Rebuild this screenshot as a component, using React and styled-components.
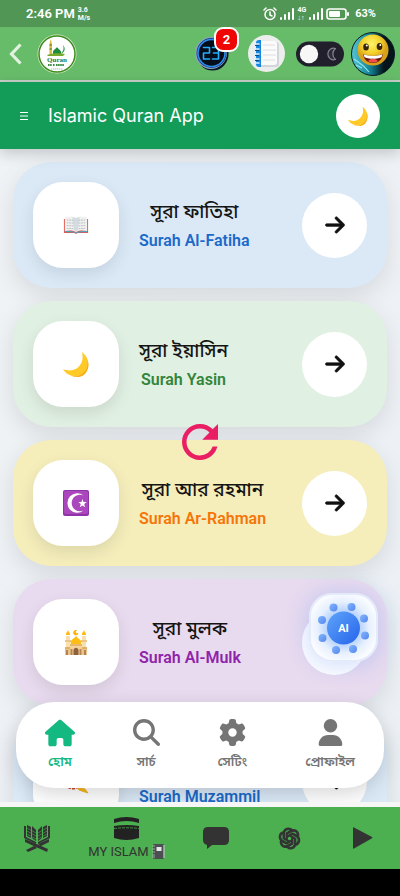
import React from "react";
import styled, { createGlobalStyle } from "styled-components";
import {
  FaArrowRight,
  FaGear,
  FaHouse,
  FaMagnifyingGlass,
  FaUser,
} from "react-icons/fa6";
import { MdRefresh } from "react-icons/md";
import { RiOpenaiFill } from "react-icons/ri";

const GlobalStyle = createGlobalStyle`
  *, *::before, *::after { box-sizing: border-box; }
  body { margin: 0; background: #000; font-family: Roboto, "Noto Sans Bengali", "Noto Sans", sans-serif; }
  button { border: 0; padding: 0; background: none; font: inherit; color: inherit; cursor: pointer; }
  a { color: inherit; text-decoration: none; }
  h1, h2, p { margin: 0; }
  svg { display: block; }
`;

const Shell = styled.div`
  display: flex;
  flex-direction: column;
  height: 100vh;
  overflow: hidden;
`;

const StatusBar = styled.div`
  display: flex;
  align-items: center;
  justify-content: space-between;
  height: 27px;
  padding: 0 24px 0 26px;
  background: #529655;
  color: #fff;
  flex: none;
`;

const StatusGroup = styled.div`
  display: flex;
  align-items: center;
  gap: 3px;
`;

const Clock = styled.span`
  font-size: 13px;
  font-weight: 600;
  line-height: 20px;
`;

const Tiny = styled.span`
  font-size: 7px;
  font-weight: 700;
  line-height: 8px;
  white-space: pre;
`;

const Percent = styled.span`
  margin-left: 2px;
  font-size: 11px;
  font-weight: 700;
`;

const TopBar = styled.header`
  display: flex;
  align-items: center;
  justify-content: space-between;
  height: 55px;
  flex: none;
  padding: 0 5px 0 9px;
  background: #67bc6a;
  border-bottom: 2px solid #c9cfc9;
`;

const TopGroup = styled.div`
  display: flex;
  align-items: center;
  gap: ${(p) => p.$gap}px;
`;

const ClockButton = styled.button`
  position: relative;
  margin-right: 8px;
`;

const PadButton = styled.button`
  margin: 0 4px;
`;

const Badge = styled.span`
  position: absolute;
  top: -9px;
  right: -10px;
  width: 25px;
  height: 25px;
  border: 2px solid #fff;
  border-radius: 9px;
  background: #f00505;
  color: #fff;
  font-size: 13px;
  font-weight: 700;
  line-height: 21px;
  text-align: center;
`;

const AppHeader = styled.div`
  position: relative;
  z-index: 1;
  display: flex;
  align-items: center;
  height: 67px;
  flex: none;
  padding: 0 20px;
  background: #129c58;
  color: #fff;
  box-shadow: 0 4px 14px rgba(0, 0, 0, 0.2);
`;

const Title = styled.h1`
  flex: 1;
  margin-left: 20px;
  font-family: Inter, sans-serif;
  font-size: 18px;
  font-weight: 400;
  line-height: 27px;
`;

const Round = styled.button`
  display: grid;
  place-items: center;
  flex: none;
  width: ${(p) => p.$size}px;
  height: ${(p) => p.$size}px;
  border-radius: 50%;
  background: #fff;
  color: #111;
`;

const Content = styled.main`
  position: relative;
  flex: 1;
  min-height: 0;
  overflow: hidden;
  background: linear-gradient(135deg, #f0f3f5, #ebf0f5);
`;

const CardList = styled.div`
  display: flex;
  flex-direction: column;
  gap: 13px;
  padding: 13px;
`;

const Card = styled.article`
  display: flex;
  align-items: center;
  gap: 20px;
  padding: 20px;
  border-radius: 38px;
  background: ${(p) => p.$bg};
  box-shadow: 0 8px 24px rgba(0, 0, 0, 0.1);
`;

const IconTile = styled.div`
  display: grid;
  place-items: center;
  flex: none;
  width: 86px;
  height: 86px;
  border-radius: 30px;
  background: #fff;
  box-shadow: 0 6px 16px rgba(0, 0, 0, 0.1);
`;

const CardText = styled.div`
  margin-right: auto;
  padding-top: 2px;
  text-align: center;
`;

const Bengali = styled.h2`
  color: #151515;
  font-size: 19px;
  font-weight: 500;
  line-height: 30px;
`;

const English = styled.p`
  color: ${(p) => p.$color};
  font-size: 16px;
  font-weight: 600;
  line-height: 28px;
`;

const Spinner = styled.div`
  position: absolute;
  top: 266px;
  left: 50%;
  margin-left: -27px;
  color: #e91e63;
`;

const AiButton = styled.button`
  position: absolute;
  top: 444px;
  right: 22px;
  width: 69px;
  height: 69px;
  border: 2px solid #e3ebfb;
  border-radius: 23px;
  background: radial-gradient(circle, #b9d4fc 36%, #e7f0fe 56%, #f9fbff 76%);
  box-shadow: 0 2px 22px 4px rgba(120, 160, 245, 0.3);
`;

const FloatNav = styled.nav`
  position: absolute;
  right: 16px;
  bottom: 14px;
  left: 16px;
  display: flex;
  justify-content: space-around;
  padding: 17px 0 14px;
  border-radius: 38px;
  background: #fff;
  box-shadow: 0 6px 20px rgba(0, 0, 0, 0.16);
`;

const FloatLink = styled.a`
  display: flex;
  flex-direction: column;
  align-items: center;
  gap: 4px;
  color: ${(p) => (p.$active ? "#14b881" : "#757575")};
  font-size: 13px;
  font-weight: 600;
  line-height: 24px;
`;

const NavIcon = styled.span`
  display: flex;
  align-items: center;
  height: 27px;
`;

const TabBar = styled.nav`
  display: flex;
  height: 67px;
  flex: none;
  border-top: 5px solid #f5f6f5;
  background: #4caf50;
`;

const Tab = styled.a`
  display: flex;
  flex-direction: column;
  align-items: center;
  justify-content: center;
  gap: 4px;
  flex: ${(p) => (p.$wide ? "0 0 106px" : "1")};
  color: #333;
  font-size: 13px;
  line-height: 16px;
`;

const TabLabel = styled.span`
  display: flex;
  align-items: center;
  gap: 3px;
  white-space: nowrap;
`;

const SystemBar = styled.div`
  height: 27px;
  flex: none;
  background: #000;
`;

const Signal = () => (
  <svg width="14" height="12" viewBox="0 0 14 12" fill="#fff">
    <rect x="0" y="9" width="2" height="3" rx="1" />
    <rect x="4" y="6" width="2" height="6" rx="1" />
    <rect x="8" y="4" width="2" height="8" rx="1" />
    <rect x="12" y="0" width="2" height="12" rx="1" />
  </svg>
);

const Alarm = () => (
  <svg width="14" height="14" viewBox="0 0 14 14" fill="none" stroke="#fff" strokeWidth="1.5" strokeLinecap="round">
    <circle cx="7" cy="7.5" r="5" />
    <path d="M7 5v3l2 1M1 3l2-2M13 3l-2-2" />
  </svg>
);

const Battery = () => (
  <svg width="24" height="12" viewBox="0 0 24 12">
    <rect x="1" y="1" width="19" height="10" rx="2.5" fill="none" stroke="#fff" strokeWidth="1.6" />
    <rect x="3" y="3" width="11" height="6" rx="1" fill="#fff" />
    <rect x="21" y="4" width="2" height="4" rx="1" fill="#fff" />
  </svg>
);

const Logo = () => (
  <svg width="40" height="40" viewBox="0 0 40 40">
    <circle cx="20" cy="20" r="19.5" fill="#dce9cf" />
    <circle cx="20" cy="20" r="18" fill="#fff" stroke="#3c8d1d" strokeWidth="1.5" />
    <path d="M12.500 21V10l1.200-5 1.200 5v11z" fill="#d6b93a" />
    <path d="M12.500 11h2.400M12.500 15h2.400" stroke="#3b7d28" strokeWidth="1" />
    <path d="M16 21v-3c0-2 3-3 4-5 1 2 4 3 4 5v3z" fill="#1f8a3e" />
    <path d="M26 11c3 3 2 8-3 9 4-3 4-6 3-9z" fill="#2f9e4f" />
    <path d="M10 21c5-2 13-2 18-1l-2 2H11z" fill="#77a92c" />
    <text x="20" y="28" textAnchor="middle" fontFamily="Liberation Serif" fontWeight="700" fontSize="7" fill="#257a35">Quran</text>
    <path d="M11 31h4M16 31h2M19 31h8" stroke="#3d8a45" strokeWidth="2" strokeDasharray="1.600 .5" />
    <path d="M14 35h12" stroke="#8aa" strokeWidth=".7" strokeDasharray="1.500 .5" />
  </svg>
);

const DigitalClock = () => (
  <svg width="35" height="35" viewBox="0 0 35 35">
    <ellipse cx="18.500" cy="18" rx="16" ry="16.500" fill="#0b1626" />
    <circle cx="17" cy="17" r="16" fill="#8fa3bd" />
    <circle cx="17.500" cy="17" r="15" fill="#173a78" />
    <circle cx="17.500" cy="17" r="13.500" fill="#060d1a" stroke="#2a8ff0" strokeWidth="1.600" />
    <g fill="none" stroke="#25aefa" strokeWidth="1.600" strokeLinejoin="round" strokeLinecap="round">
      <path d="M9.500 11.500h6V17h-6v6h6" />
      <path d="M18.500 11.500h6V23h-6M19.500 17h5" />
    </g>
  </svg>
);

const Notebook = () => (
  <svg width="37" height="37" viewBox="0 0 37 37">
    <circle cx="18.500" cy="18.500" r="18.500" fill="#eceeed" />
    <rect x="10" y="7" width="21" height="25" rx="3" fill="#d3d6d8" />
    <rect x="9" y="6" width="20" height="24" rx="3" fill="#fbfbfb" />
    <path d="M8 8c0-2 1-3 3-3h2v27h-2c-2 0-3-1-3-3z" fill="#1688e0" />
    <path d="M15 10h12M15 15h13M15 20h13M15 25h12" stroke="#dcdee0" />
    <path d="M7 9h4M7 14h4M7 19h4M7 24h4M7 28h4" stroke="#d8f0ff" strokeWidth="1.600" strokeLinecap="round" />
    <path d="M7 10.500h4M7 15.500h4M7 20.500h4M7 25.500h4" stroke="#124a80" strokeWidth="1" />
  </svg>
);

const ThemeSwitch = () => (
  <svg width="48" height="26" viewBox="0 0 48 26">
    <rect width="48" height="25" y=".5" rx="12.500" fill="#201f2b" />
    <circle cx="13" cy="13" r="9.200" fill="#f7f7f7" />
    <path d="M39.500 7.500a5.800 5.800 0 1 0 0 11 7 7 0 0 1 0-11z" fill="#2c2b37" stroke="#85858e" strokeWidth="1.200" strokeLinejoin="round" />
  </svg>
);

const Smiley = () => (
  <svg width="44" height="44" viewBox="0 0 44 44">
    <defs>
      <radialGradient id="face" cx=".45" cy=".3">
        <stop offset="0" stopColor="#fff36a" />
        <stop offset=".6" stopColor="#f4d22b" />
        <stop offset="1" stopColor="#d9a01a" />
      </radialGradient>
      <linearGradient id="space" x1="0" x2="1">
        <stop offset="0" stopColor="#56c6d5" />
        <stop offset=".45" stopColor="#128091" />
        <stop offset=".75" stopColor="#06151c" />
      </linearGradient>
    </defs>
    <circle cx="22" cy="22" r="21.500" fill="url(#space)" stroke="#0b1d20" />
    <path d="M3 27c5 4 10 6 15 13M5 33l6 3M9 11l4-4" stroke="#8de8ef" strokeWidth="1.200" fill="none" />
    <circle cx="22" cy="18" r="15.500" fill="url(#face)" />
    <ellipse cx="15" cy="15" rx="2.800" ry="3.600" fill="#3a2208" />
    <ellipse cx="28.500" cy="14.500" rx="2.800" ry="3.600" fill="#3a2208" />
    <circle cx="15.800" cy="13.600" r="1" fill="#fff" />
    <circle cx="29.300" cy="13.100" r="1" fill="#fff" />
    <path d="M12 22c6 2.500 14 2.500 20 0-1 6-5 9-10 9s-9-3-10-9z" fill="#6b1610" />
    <path d="M12.500 22.300c6 2.300 13 2.300 19 0l-1 3c-6 2-11 2-17 0z" fill="#fff" />
    <path d="M17 29c3-3 7-3 10 0-3 2-7 2-10 0z" fill="#ef5148" />
  </svg>
);

const Chevron = () => (
  <svg width="13" height="22" viewBox="0 0 13 22" fill="none" stroke="#e1f2e1" strokeWidth="3.200">
    <path d="M11.500 1.500 2.500 11l9 9.500" />
  </svg>
);

const Moon = ({ size }) => (
  <svg width={size} height={size} viewBox="0 0 26 26">
    <path d="M19 1c9 7 8 19-1 23C11 27 3 24 0 18c7 3 14 1 17-4 3-4 3-8 2-13z" fill="#ffca28" />
    <path d="M24 8c3 12-7 19-16 17 7 3 14 0 16-5 2-4 2-8 0-12z" fill="#f6ad1c" />
  </svg>
);

const OpenBook = () => (
  <svg width="26" height="19" viewBox="0 0 28 20">
    <path d="M1 3h26v15H16l-2 1-2-1H1z" fill="#e2574f" />
    <path d="M2 15l12 2 12-2v2l-10 .5-2 1-2-1L2 17z" fill="#4da5bd" />
    <path d="M2 1c5-1 9-1 12 1v15c-4-2-8-2-12-1zM26 1c-5-1-9-1-12 1v15c4-2 8-2 12-1z" fill="#f1f1f1" />
    <path d="M14 2c-2-1-3-1-4-1l2 14 2 2 2-2 2-14c-1 0-2 0-4 1z" fill="#d4dcdf" />
    <path d="M4 4l8 .5M4 7l8 .5M4 10l8 .5M4 13l8 .5M24 4l-8 .5M24 7l-8 .5M24 10l-8 .5M24 13l-8 .5" stroke="#b9bdbf" strokeWidth="1" strokeDasharray="2 .6" />
  </svg>
);

const StarCrescent = () => (
  <svg width="26" height="26" viewBox="0 0 26 26">
    <rect width="26" height="26" rx="2" fill="#8e34a8" />
    <rect x="1" y="1" width="24" height="23" rx="2" fill="#ab47bc" />
    <path d="M20.500 5.500A9.800 9.800 0 1 0 20.500 20.500 8.300 8.300 0 1 1 20.500 5.500z" fill="#fff" />
    <path d="m19.500 9 1 3 3.300.1-2.600 2 .9 3.200-2.600-1.900-2.700 1.900 1-3.200-2.600-2 3.200-.1z" fill="#fff" />
  </svg>
);

const Mosque = () => (
  <svg width="24" height="27" viewBox="0 0 24 27">
    <path d="M2 7h4v19H2zM18 7h4v19h-4z" fill="#f7dfae" />
    <path d="M1 11h6v2H1zM17 11h6v2h-6zM1 18h22v8H1z" fill="#eac58b" />
    <path d="M6 15h12v11H6z" fill="#f3d39a" />
    <path d="M2 6c0-3 1-2 2-5 1 3 2 2 2 5zM18 6c0-3 1-2 2-5 1 3 2 2 2 5z" fill="#ffb90f" />
    <path d="M7 15c-2-4 3-5 5-8 2 3 7 4 5 8z" fill="#ffbd18" />
    <path d="M12.500 1.500a2.300 2.300 0 1 0 1.500 3 1.600 1.600 0 1 1-1.500-3z" fill="#ffb000" stroke="#ffb000" strokeWidth=".8" />
    <path d="M2 26v-5h2v5zM6.500 26v-6h2v6zM15.500 26v-6h2v6zM20 26v-5h2v5z" fill="#b98453" />
    <path d="M9.500 26v-5c1-3 4-3 5 0v5z" fill="#8d613c" />
    <path d="M6 16h12M1 19h5M18 19h5" stroke="#d69a45" />
  </svg>
);

const Beads = () => (
  <svg width="26" height="26" viewBox="0 0 26 26">
    <circle cx="10" cy="11" r="9" fill="none" stroke="#c74a35" strokeWidth="3" strokeDasharray="3 1" />
    <path d="m14 19 8 2 3 4-9-3z" fill="#f5b51f" stroke="#f5b51f" />
  </svg>
);

const QuranStand = () => (
  <svg width="26" height="28" viewBox="0 0 26 28" fill="#333">
    <path d="M0 2h2v11l10 5v2L0 14zM26 2h-2v11l-10 5v2l12-6z" />
    <path d="M3 1l4 2v11l-4-2zM23 1l-4 2v11l4-2zM8 2l4 4v11l-4-3zM18 2l-4 4v11l4-3z" />
    <path d="M3 4l9 5M3 7l9 5M3 10l9 5M23 4l-9 5M23 7l-9 5M23 10l-9 5" stroke="#4caf50" strokeWidth=".6" />
    <path d="M1 15l23 10-1 3L1 18zM25 15 14 20l3 2 8-4zM10 22l-8 4 2 2 9-4z" />
  </svg>
);

const Kaaba = () => (
  <svg width="25" height="23" viewBox="0 0 25 23" fill="#222">
    <path d="M0 2Q12.500-2 25 2v4Q12.500 2 0 6z" />
    <path d="M0 9Q12.500 7 25 9v12q-12.500 4-25 0z" />
    <path d="M0 11.500Q12.500 10 25 11.500" stroke="#4caf50" strokeWidth=".8" strokeDasharray="3 1" fill="none" />
  </svg>
);

const Ledger = () => (
  <svg width="13" height="15" viewBox="0 0 13 15">
    <rect x="1" width="11" height="15" rx="1" fill="#4b4f52" />
    <path d="M12 1v13" stroke="#b5babc" strokeWidth="1.400" />
    <rect x="4.500" y="3" width="5" height="4" fill="#e6e6e6" />
    <path d="M0 2h3M0 5h3M0 8h3M0 11h3M0 13h3" stroke="#b9bdbf" strokeWidth=".8" />
  </svg>
);

const Chat = () => (
  <svg width="26" height="22" viewBox="0 0 26 22" fill="#333">
    <path d="M5 0h16q5 0 5 5v8q0 5-5 5H9l-5 4v-4q-4-1-4-5V5q0-5 5-5z" />
  </svg>
);

const Play = () => (
  <svg width="20" height="22" viewBox="0 0 20 22" fill="#333">
    <path d="M0 1q0-1 1-.6l18 9.700q1 .6 0 1.200L1 21.600q-1 .4-1-.6z" />
  </svg>
);

const dots = [
  [22.500, 12.500], [40.500, 12], [53, 23.500], [54, 40.500],
  [42, 54], [25, 55], [11.500, 43], [11, 25],
];

const AiArt = () => (
  <svg width="65" height="65" viewBox="0 0 65 65">
    <defs>
      <linearGradient id="core" x1="0" y1="0" x2="1" y2="1">
        <stop offset="0" stopColor="#60a5fa" />
        <stop offset="1" stopColor="#2563eb" />
      </linearGradient>
      <linearGradient id="dot" x1="0" x2="1" y2="1">
        <stop offset="0" stopColor="#82b6fc" />
        <stop offset="1" stopColor="#5586ee" />
      </linearGradient>
    </defs>
    {dots.map(([x, y]) => (
      <circle key={`${x}-${y}`} cx={x} cy={y} r="4" fill="url(#dot)" />
    ))}
    <circle cx="32.500" cy="33" r="16.500" fill="url(#core)" />
    <text x="32.500" y="37" textAnchor="middle" fontFamily="Roboto" fontWeight="700" fontSize="11" fill="#fff">AI</text>
  </svg>
);

const surahs = [
  { bn: "সূরা ফাতিহা", en: "Surah Al-Fatiha", bg: "#dbe9f7", color: "#1b6ac9", icon: <OpenBook /> },
  { bn: "সূরা ইয়াসিন", en: "Surah Yasin", bg: "#e0f0e2", color: "#33853a", icon: <Moon size={26} /> },
  { bn: "সূরা আর রহমান", en: "Surah Ar-Rahman", bg: "#f5eebb", color: "#f57508", icon: <StarCrescent /> },
  { bn: "সূরা মুলক", en: "Surah Al-Mulk", bg: "#e9dbef", color: "#8e24aa", icon: <Mosque /> },
  { bn: "সূরা মুযযাম্মিল", en: "Surah Muzammil", bg: "#dbe9f7", color: "#1b6ac9", icon: <Beads /> },
];

const navItems = [
  { label: "হোম", icon: <FaHouse size={30} />, active: true },
  { label: "সার্চ", icon: <FaMagnifyingGlass size={27} /> },
  { label: "সেটিং", icon: <FaGear size={27} /> },
  { label: "প্রোফাইল", icon: <FaUser size={27} /> },
];

export default function App() {
  return (
    <Shell>
      <GlobalStyle />
      <StatusBar>
        <StatusGroup>
          <Clock>2:46 PM</Clock>
          <Tiny>{"3.6\nM/s"}</Tiny>
        </StatusGroup>
        <StatusGroup>
          <Alarm />
          <Signal />
          <Tiny>{"4G\n↓↑"}</Tiny>
          <Signal />
          <Battery />
          <Percent>63%</Percent>
        </StatusGroup>
      </StatusBar>

      <TopBar>
        <TopGroup $gap={15}>
          <button aria-label="Back"><Chevron /></button>
          <Logo />
        </TopGroup>
        <TopGroup $gap={7}>
          <ClockButton aria-label="Calendar">
            <DigitalClock />
            <Badge>2</Badge>
          </ClockButton>
          <PadButton aria-label="Notes"><Notebook /></PadButton>
          <button role="switch" aria-checked="false" aria-label="Dark mode"><ThemeSwitch /></button>
          <button aria-label="Profile"><Smiley /></button>
        </TopGroup>
      </TopBar>

      <AppHeader>
        <button aria-label="Menu">
          <svg width="8" height="8" viewBox="0 0 8 8" stroke="#fff">
            <path d="M0 .5h8M0 4h8M0 7.500h8" />
          </svg>
        </button>
        <Title>Islamic Quran App</Title>
        <Round $size={44} aria-label="Night mode"><Moon size={20} /></Round>
      </AppHeader>

      <Content>
        <CardList>
          {surahs.map((s) => (
            <Card key={s.en} $bg={s.bg}>
              <IconTile>{s.icon}</IconTile>
              <CardText>
                <Bengali>{s.bn}</Bengali>
                <English $color={s.color}>{s.en}</English>
              </CardText>
              <Round $size={65} aria-label={`Open ${s.en}`}>
                <FaArrowRight size={22} stroke="currentColor" strokeWidth={12} />
              </Round>
            </Card>
          ))}
        </CardList>
        <Spinner><MdRefresh size={54} /></Spinner>
        <AiButton aria-label="AI assistant"><AiArt /></AiButton>
        <FloatNav>
          {navItems.map((n) => (
            <FloatLink key={n.label} href="#" $active={n.active}>
              <NavIcon>{n.icon}</NavIcon>
              {n.label}
            </FloatLink>
          ))}
        </FloatNav>
      </Content>

      <TabBar>
        <Tab href="#" aria-label="Quran"><QuranStand /></Tab>
        <Tab href="#" $wide>
          <Kaaba />
          <TabLabel>MY ISLAM<Ledger /></TabLabel>
        </Tab>
        <Tab href="#" aria-label="Messages"><Chat /></Tab>
        <Tab href="#" aria-label="Assistant">
          <RiOpenaiFill size={25} stroke="currentColor" strokeWidth={1.2} />
        </Tab>
        <Tab href="#" aria-label="Videos"><Play /></Tab>
      </TabBar>
      <SystemBar />
    </Shell>
  );
}
